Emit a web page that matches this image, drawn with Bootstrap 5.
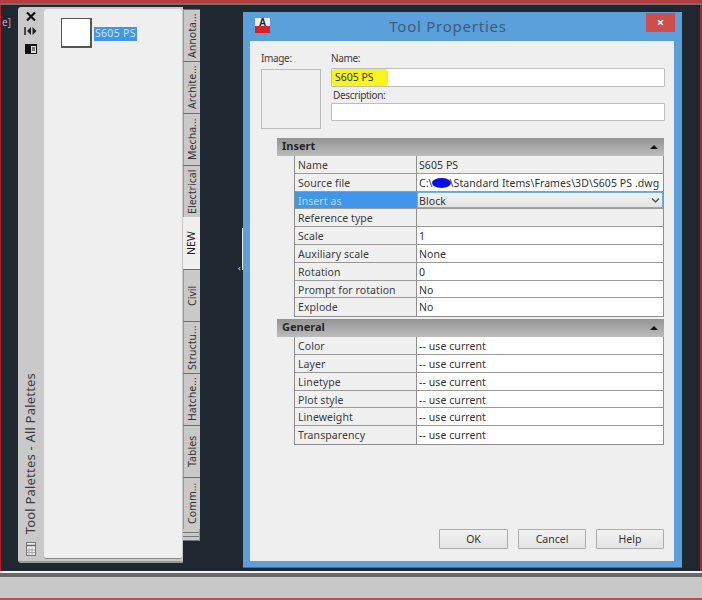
<!doctype html>
<html lang="en">
<head>
<meta charset="utf-8">
<title>Tool Properties</title>
<link href="https://cdn.jsdelivr.net/npm/bootstrap@5.3.0/dist/css/bootstrap.min.css" rel="stylesheet">
<style>
html,body{margin:0;height:600px;overflow:hidden;background:#1f2830}
body{font-family:"Noto Sans","Open Sans",sans-serif;font-size:10.5px;color:#333;width:702px;line-height:1.2}
.frame{height:600px;width:702px;border-left:1px solid #b22027;border-right:2px solid #a8272c}
.top-strip{height:5px;background:linear-gradient(#b23c3e 0,#b23c3e 3px,#707070 3px,#707070 5px);margin:0 -2px 0 -1px}
.desk{height:566px;position:relative;background:#1f2830}
.bottom-strip{height:29px;border-top:2px solid #f2f2f2;background:linear-gradient(#686868 0,#686868 4px,#c8c8c8 4px,#c8c8c8 25px,#c44a50 25px);margin:0 -2px 0 -1px}
.tag-e{position:absolute;left:1px;top:11px;color:#aab;font-size:10px}
.palette{position:absolute;left:17px;top:2px;width:183px;height:556px}
.rail{width:26px;background:#c9c9c9;border-radius:3px 0 0 3px;border-bottom:2px solid #9a9a9a}
.rail svg{display:block}
.rail-title{writing-mode:vertical-rl;transform:rotate(180deg);font-size:13px;color:#3c3c3c;letter-spacing:.2px;white-space:nowrap}
.pal-body{width:139px;background:#c9c9c9;padding:2px 1px 2px 0;border-bottom:2px solid #9a9a9a}
.pal-inner{background:#efefef;height:100%;border-radius:3px;padding:9px 0 0 17px;border-bottom:1px solid #888}
.thumb{width:31px;height:30px;background:#fff;border:1px solid #555;border-right-width:2px;border-bottom-width:2px}
.sel-name{background:#3f96ea;color:#cfe6fb;font-size:10.5px;padding:0 1px;margin:9px 0 0 2px;height:14px;letter-spacing:.3px}
.tabs{width:17px;margin-top:2px}
.vtab{height:52px;background:#c9c9c9;border-bottom:1px solid #6f6f6f;border-right:1px solid #999;color:#333;writing-mode:vertical-rl;transform:rotate(180deg);text-align:center;font-size:10.5px;line-height:16px;letter-spacing:.05px;white-space:nowrap;overflow:hidden}
.vtab-wrap{height:52px}
.vtab-on .vtab{background:#efefef;border:0;width:17px;color:#222}
.tab-end{height:12px;background:repeating-linear-gradient(#c9c9c9 0,#c9c9c9 3px,#777 3px,#777 4px);border-right:1px solid #999}
.sash{position:absolute;left:241px;top:223px;width:2px;height:42px;background:#e8e8e8}
.sash-tip{position:absolute;left:237px;top:258px;color:#ddd;font-size:9px;line-height:1}
.dlg{position:absolute;left:242px;top:7px;width:439px;height:556px;background:#5b9fdb;padding:0 8px 7px 7px;border-bottom:1px solid #3f6f9f}
.dlg-title{height:29px;position:relative;text-align:center;color:#3d5c7c;font-size:15px;line-height:28px;letter-spacing:.75px;padding-right:28px}
.app-ico{position:absolute;left:5px;top:6px;width:15px;height:15px;background:linear-gradient(#eee 0,#eee 8px,#d8202a 8px);color:#222;font:bold 10px/10px "Liberation Sans",sans-serif;text-align:center;letter-spacing:0}
.close-x{position:absolute;right:-1px;top:1px;width:29px;height:19px;background:#cf4d4d;color:#fff;font-size:13px;line-height:18px;text-align:center;font-weight:700;letter-spacing:0}
.dlg-body{height:520px;background:#efefef;padding:10px 9px 0 11px;position:relative}
.lbl{color:#3a3a3a;font-size:10px;line-height:14px;letter-spacing:-.35px}
.img-box{width:60px;height:60px;border:1px solid #bbb;background:#efefef;margin-top:4px}
.field{width:334px;height:19px;background:#fff;border:1px solid #bdbdbd;border-radius:1px;margin-top:3px;position:relative;line-height:17px;padding-left:3px;color:#333;font-size:10.5px}
.hl{background:#f6f61e;display:inline-block;margin-left:-3px;height:17px;padding:0 14px 0 3px;border-radius:3px}
.grp-head{margin-left:16px;width:387px;height:18px;background:linear-gradient(#939393,#bcbcbc);font-weight:700;font-size:11px;line-height:16px;padding-left:5px;color:#262626;position:relative}
.caret-up{position:absolute;right:6px;top:7px;width:0;height:0;border:4px solid transparent;border-top:0;border-bottom:4px solid #111}
.props{margin-left:33px;width:370px;border-left:1px solid #8f8f8f;border-right:1px solid #8f8f8f;border-bottom:1px solid #8f8f8f}
.prow{height:17.8px;display:flex;border-bottom:1px solid #9a9a9a;line-height:18px;letter-spacing:.08px}
.prow:last-child{border-bottom:0}
.pk{width:122px;background:#f0f0f0;padding-left:3px;border-right:1px solid #8f8f8f;color:#3c3c3c;flex:none;overflow:hidden}
.pv{flex:1;background:#fff;padding-left:2px;color:#333;white-space:nowrap;overflow:hidden;position:relative}
.pv.gr{background:#f0f0f0}
.prow.on .pk{background:#3f96ea;color:#bcdcf8;border-right:0}
.prow.on .pv{background:linear-gradient(#f4f4f4,#e2e2e2);outline:1px solid #70b0e4;outline-offset:-1px}
.scrib{display:inline-block;width:19px;height:10px;background:#0a10e8;border-radius:50%;vertical-align:-1px;margin:0 -1px 0 -1px}
.chev{position:absolute;right:3px;top:5px}
.gap-grp{height:2px}
.btn-ac{width:68px;height:20px;padding:0;font-size:10.5px;line-height:18px;background:linear-gradient(#f2f2f2,#e4e4e4);border:1px solid #acacac;border-radius:1px;color:#333}
.btn-ac:first-child{width:69px}
.btn-ac:hover{background:#e4e4e4;color:#333;border-color:#acacac}
.foot-btns{position:absolute;right:10px;bottom:12px;gap:10px}
</style>
</head>
<body>
<div class="frame">
  <div class="top-strip"></div>
  <div class="desk">
    <div class="tag-e">e]</div>

    <div class="palette d-flex">
      <div class="rail d-flex flex-column align-items-center">
        <svg class="mt-1" width="12" height="11" viewBox="0 0 12 11"><path d="M2 1.500L10 9.500M10 1.500L2 9.500" stroke="#111" stroke-width="2.200"/></svg>
        <svg class="mt-1" width="13" height="10" viewBox="0 0 13 10" style="margin-left:-2px"><path d="M1 1V9" stroke="#111" stroke-width="1.400"/><path d="M7 1V9L3 5ZM8.500 1V9L12.500 5Z" fill="#222"/></svg>
        <svg class="mt-2" width="12" height="10" viewBox="0 0 12 10"><rect width="12" height="10" fill="#111"/><rect x="6" y="2" width="5" height="7" fill="#ddd"/><path d="M7 4H10M7 6H10" stroke="#111"/></svg>
        <div class="flex-grow-1"></div>
        <div class="rail-title">Tool Palettes - All Palettes</div>
        <svg class="mt-2 mb-1" width="11" height="15" viewBox="0 0 11 15" style="margin-left:1px"><rect x=".5" y=".5" width="9" height="13" fill="#eee" stroke="#777"/><path d="M.5 3.500H9.500" stroke="#666" stroke-width="1.500"/><path d="M3 6V13M6 6V13M1 8H9M1 10.500H9" stroke="#aaa"/></svg>
      </div>
      <div class="pal-body">
        <div class="pal-inner d-flex align-items-start">
          <div class="thumb"></div>
          <div class="sel-name">S605 PS</div>
        </div>
      </div>
      <div class="tabs">
        <div class="vtab-wrap"><div class="vtab">Annota...</div></div>
        <div class="vtab-wrap"><div class="vtab">Archite...</div></div>
        <div class="vtab-wrap"><div class="vtab">Mecha...</div></div>
        <div class="vtab-wrap"><div class="vtab">Electrical</div></div>
        <div class="vtab-wrap vtab-on"><div class="vtab">NEW</div></div>
        <div class="vtab-wrap"><div class="vtab">Civil</div></div>
        <div class="vtab-wrap"><div class="vtab">Structu...</div></div>
        <div class="vtab-wrap"><div class="vtab">Hatche...</div></div>
        <div class="vtab-wrap"><div class="vtab">Tables</div></div>
        <div class="vtab-wrap"><div class="vtab">Comm...</div></div>
        <div class="tab-end"></div>
      </div>
    </div>

    <div class="sash"></div>
    <div class="sash-tip">&#8249;</div>

    <div class="dlg">
      <div class="dlg-title">
        <div class="app-ico">A</div>
        Tool Properties
        <div class="close-x">&#215;</div>
      </div>
      <div class="dlg-body">
        <div class="d-flex" style="height:87px">
          <div style="width:71px">
            <div class="lbl">Image:</div>
            <div class="img-box"></div>
          </div>
          <div>
            <div class="lbl">Name:</div>
            <div class="field"><span class="hl">S605 PS</span></div>
            <div class="lbl" style="margin:1px 0 0 2px">Description:</div>
            <div class="field" style="height:18px;margin-top:1px"></div>
          </div>
        </div>
        <div class="grp-head">Insert<span class="caret-up"></span></div>
        <div class="props">
          <div class="prow"><div class="pk">Name</div><div class="pv gr">S605 PS</div></div>
          <div class="prow"><div class="pk">Source file</div><div class="pv">C:\<span class="scrib"></span>\Standard Items\Frames\3D\S605 PS .dwg</div></div>
          <div class="prow on"><div class="pk">Insert as</div><div class="pv">Block<svg class="chev" width="9" height="7" viewBox="0 0 9 7"><path d="M1 1.500L4.500 5L8 1.500" fill="none" stroke="#555" stroke-width="1.500"/></svg></div></div>
          <div class="prow"><div class="pk">Reference type</div><div class="pv gr"></div></div>
          <div class="prow"><div class="pk">Scale</div><div class="pv">1</div></div>
          <div class="prow"><div class="pk">Auxiliary scale</div><div class="pv">None</div></div>
          <div class="prow"><div class="pk">Rotation</div><div class="pv">0</div></div>
          <div class="prow"><div class="pk">Prompt for rotation</div><div class="pv">No</div></div>
          <div class="prow"><div class="pk">Explode</div><div class="pv">No</div></div>
        </div>
        <div class="gap-grp"></div>
        <div class="grp-head">General<span class="caret-up"></span></div>
        <div class="props">
          <div class="prow"><div class="pk">Color</div><div class="pv">-- use current</div></div>
          <div class="prow"><div class="pk">Layer</div><div class="pv">-- use current</div></div>
          <div class="prow"><div class="pk">Linetype</div><div class="pv">-- use current</div></div>
          <div class="prow"><div class="pk">Plot style</div><div class="pv">-- use current</div></div>
          <div class="prow"><div class="pk">Lineweight</div><div class="pv">-- use current</div></div>
          <div class="prow"><div class="pk">Transparency</div><div class="pv">-- use current</div></div>
        </div>
        <div class="foot-btns d-flex">
          <button type="button" class="btn btn-ac">OK</button>
          <button type="button" class="btn btn-ac">Cancel</button>
          <button type="button" class="btn btn-ac">Help</button>
        </div>
      </div>
    </div>
  </div>
  <div class="bottom-strip"></div>
</div>
<script src="https://cdn.jsdelivr.net/npm/bootstrap@5.3.0/dist/js/bootstrap.bundle.min.js"></script>
</body>
</html>
